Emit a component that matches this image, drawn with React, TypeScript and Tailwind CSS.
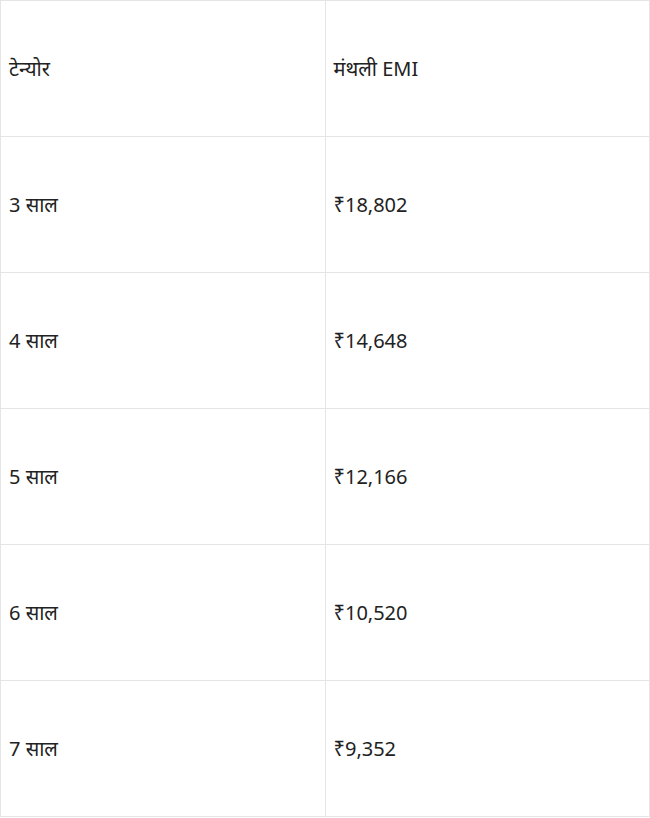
const rows = [
  ['3 साल', '₹18,802'],
  ['4 साल', '₹14,648'],
  ['5 साल', '₹12,166'],
  ['6 साल', '₹10,520'],
  ['7 साल', '₹9,352'],
];

const Cell = ({ children, last }: { children: React.ReactNode; last?: boolean }) => (
  <td className={`h-[136px] px-2 align-middle border-[#e5e5e5] ${last ? '' : 'border-r'}`}>
    {children}
  </td>
);

export default function App() {
  return (
    <div className="w-[650px] bg-white text-[20px] text-[#222]" style={{ fontFamily: '"Noto Sans", sans-serif' }}>
      <table className="w-full border-collapse border border-[#e5e5e5] table-fixed">
        <tbody>
          <tr className="border-b border-[#e5e5e5]">
            <Cell>टेन्योर</Cell>
            <Cell last>मंथली EMI</Cell>
          </tr>
          {rows.map(([tenure, emi]) => (
            <tr key={tenure} className="border-b border-[#e5e5e5]">
              <Cell>{tenure}</Cell>
              <Cell last>{emi}</Cell>
            </tr>
          ))}
        </tbody>
      </table>
    </div>
  );
}
